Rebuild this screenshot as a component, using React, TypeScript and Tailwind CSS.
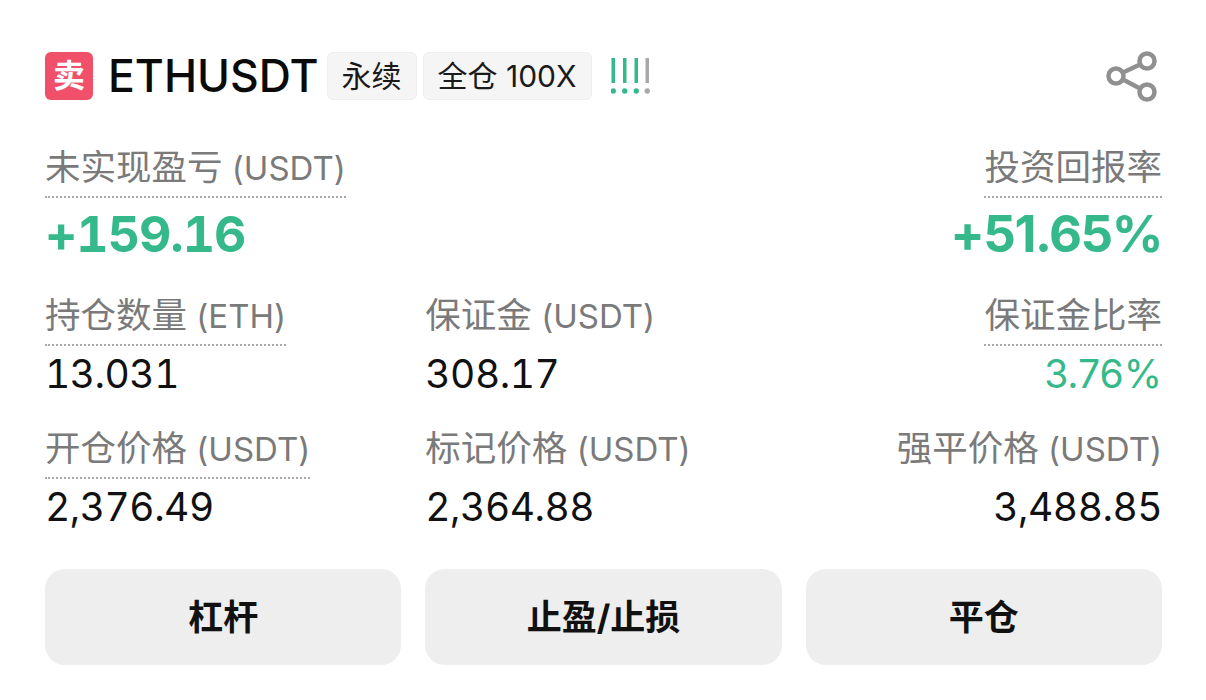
import React from "react";

const FONT = "font-['Inter','Noto_Sans_CJK_SC',sans-serif]";

const Label: React.FC<{ text: string; unit?: string; dotted?: boolean }> = ({ text, unit, dotted }) => (
    <span
        className={`inline-block h-[50px] pb-[8px] text-[35.5px] leading-[40px] text-[#7a7a7a] whitespace-nowrap ${
            dotted ? "border-b-2 border-dotted border-[#a8a8a8]" : ""
        }`}
    >
        {text}
        {unit && <span className="text-[33px]"> {unit}</span>}
    </span>
);

const Cell: React.FC<{
    text: string;
    unit?: string;
    value: string;
    dotted?: boolean;
    right?: boolean;
    green?: boolean;
}> = ({ text, unit, value, dotted, right, green }) => (
    <div className={`flex flex-col ${right ? "items-end" : "items-start"}`}>
        <Label text={text} unit={unit} dotted={dotted} />
        <span
            className={`mt-[4px] leading-[48px] ${
                green ? "text-[39px] text-[#35b98a]" : "text-[39px] tracking-[-0.5px] tabular-nums text-[#111111]"
            }`}
        >
            {value}
        </span>
    </div>
);

const Tag: React.FC<{ children: React.ReactNode }> = ({ children }) => (
    <span className="flex h-[48px] items-center rounded-md border border-[#efefef] bg-[#f5f5f5] px-[14px] text-[30px] text-[#1a1a1a] whitespace-nowrap">
        {children}
    </span>
);

const Action: React.FC<{ children: React.ReactNode }> = ({ children }) => (
    <button className="flex h-[96px] items-center justify-center rounded-[20px] bg-[#eeeeee] text-[35px] font-bold text-[#111111]">
        {children}
    </button>
);

export default function App() {
    return (
        <div className={`h-[700px] w-[1206px] bg-white pl-[45px] pr-[44px] pt-[52px] ${FONT}`}>
            {/* header */}
            <div className="flex h-[48px] items-center">
                <span className="flex h-[48px] w-[48px] items-center justify-center rounded-md bg-[#f0506a] text-[32px] font-bold text-white">
                    卖
                </span>
                <span className="ml-[15px] mr-[8px] text-[44.5px] font-medium leading-[48px] text-[#0a0a0a]">ETHUSDT</span>
                <div className="flex gap-[6px]">
                    <Tag>永续</Tag>
                    <Tag>全仓 100X</Tag>
                </div>
                <svg className="ml-[19px]" width="40" height="40" viewBox="0 0 40 40">
                    <g fill="#35b98a">
                        <rect x="0.5" y="2" width="3.5" height="25" />
                        <circle cx="2.25" cy="35" r="2.7" />
                        <rect x="12" y="2" width="3.5" height="25" />
                        <circle cx="13.75" cy="35" r="2.7" />
                        <rect x="23.5" y="2" width="3.5" height="25" />
                        <circle cx="25.25" cy="35" r="2.7" />
                    </g>
                    <rect x="34.5" y="2" width="3.5" height="25" fill="#a8a8a8" />
                    <circle cx="36.25" cy="35" r="2.7" fill="#a8a8a8" />
                </svg>
                <svg className="ml-auto mr-[4px]" width="52" height="52" viewBox="0 0 52 52" fill="none" stroke="#909090" strokeWidth="4.5">
                    <circle cx="10" cy="26" r="7.5" />
                    <circle cx="41" cy="11" r="7.5" />
                    <circle cx="41" cy="42" r="7.5" />
                    <path d="M17 22.5 L34 14.5 M17 29.5 L34 38.5" />
                </svg>
            </div>

            {/* pnl */}
            <div className="mt-[48px] flex justify-between">
                <div className="flex flex-col items-start">
                    <Label text="未实现盈亏" unit="(USDT)" dotted />
                    <span className="mt-[6px] text-[50px] font-bold leading-[60px] tracking-[-1px] tabular-nums text-[#35b98a]">+159.16</span>
                </div>
                <div className="flex flex-col items-end">
                    <Label text="投资回报率" dotted />
                    <span className="mt-[6px] text-[51px] font-bold leading-[60px] tracking-[-1.5px] text-[#35b98a]">+51.65%</span>
                </div>
            </div>

            {/* stats */}
            <div className="mt-[32px] grid grid-cols-3 gap-x-[24px] gap-y-[31px]">
                <Cell text="持仓数量" unit="(ETH)" value="13.031" dotted />
                <Cell text="保证金" unit="(USDT)" value="308.17" />
                <Cell text="保证金比率" value="3.76%" dotted right green />
                <Cell text="开仓价格" unit="(USDT)" value="2,376.49" dotted />
                <Cell text="标记价格" unit="(USDT)" value="2,364.88" />
                <Cell text="强平价格" unit="(USDT)" value="3,488.85" right />
            </div>

            {/* actions */}
            <div className="mt-[38px] grid grid-cols-3 gap-[24px]">
                <Action>杠杆</Action>
                <Action>止盈/止损</Action>
                <Action>平仓</Action>
            </div>
        </div>
    );
}
